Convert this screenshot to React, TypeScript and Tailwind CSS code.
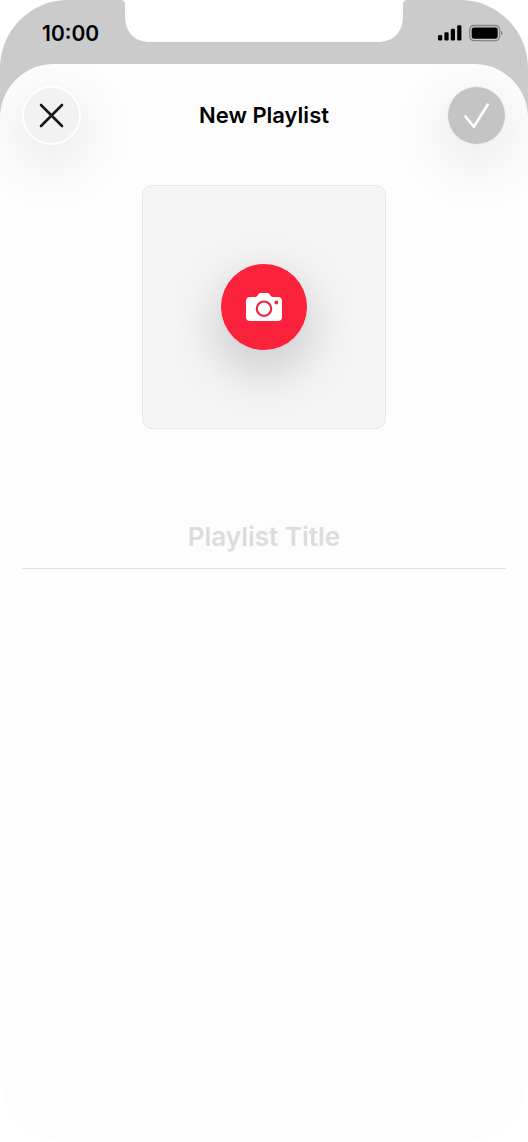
import React, { useState } from "react";

function Notch() {
    return (
        <svg viewBox="0 0 288 42" className="h-[42px] w-[288px]" fill="#ffffff" aria-hidden="true">
            <path d="M0 0C3.600 0 5 1.800 5 5V15C5 32 14 42 31 42H257C274 42 283 32 283 15V5C283 1.800 284.400 0 288 0Z" />
        </svg>
    );
}

function SignalIcon() {
    return (
        <svg viewBox="0 0 24 16" className="h-4 w-6" fill="#000000" aria-hidden="true">
            <rect x="0" y="10" width="4.200" height="5.500" rx="1.200" />
            <rect x="6.400" y="7.300" width="4.200" height="8.200" rx="1.200" />
            <rect x="12.800" y="3.700" width="4.200" height="11.800" rx="1.200" />
            <rect x="19.200" y="0.200" width="4.200" height="15.300" rx="1.200" />
        </svg>
    );
}

function BatteryIcon() {
    return (
        <svg viewBox="0 0 35 18" className="h-[18px] w-[35px]" fill="none" aria-hidden="true">
            <rect x="0.800" y="1.500" width="29.800" height="15.200" rx="4.200" stroke="#858585" strokeWidth="1.300" />
            <rect x="2.700" y="3.400" width="26" height="11.400" rx="2.400" fill="#000000" />
            <path d="M32 7V11.400C33.900 10.800 33.900 7.600 32 7Z" fill="#858585" />
        </svg>
    );
}

function CloseIcon() {
    return (
        <svg viewBox="0 0 25 25" className="size-[25px]" fill="none" stroke="#1a1a1a" strokeWidth="2.600" strokeLinecap="round" aria-hidden="true">
            <path d="M2 2L23 23M23 2L2 23" />
        </svg>
    );
}

function CheckIcon() {
    return (
        <svg viewBox="0 0 27 27" className="size-[27px]" fill="none" stroke="#ffffff" strokeWidth="2.600" strokeLinecap="round" strokeLinejoin="round" aria-hidden="true">
            <path d="M2.500 14.500L10.800 24.800L24.800 2.500" />
        </svg>
    );
}

function CameraIcon() {
    return (
        <svg viewBox="0 0 36 28" className="h-7 w-9" aria-hidden="true">
            <path
                d="M4 4H9.500C10.400 4 11 3.500 11.600 2.600L12.300 1.500C13 0.500 13.700 0 14.800 0H21.200C22.300 0 23 0.500 23.700 1.500L24.400 2.600C25 3.500 25.600 4 26.500 4H32C34.500 4 36 5.500 36 8V24C36 26.500 34.500 28 32 28H4C1.500 28 0 26.500 0 24V8C0 5.500 1.500 4 4 4Z"
                fill="#ffffff"
            />
            <circle cx="18" cy="15.700" r="7.200" fill="none" stroke="#e52b40" strokeWidth="2.200" />
            <circle cx="30.300" cy="9.500" r="1.900" fill="#e52b40" />
        </svg>
    );
}

function StatusBar() {
    return (
        <div className="grid h-16 grid-cols-[1fr_288px_1fr] items-start">
            <div className="flex h-[68px] items-center pl-[42px] text-[21px] font-semibold text-black">10:00</div>
            <Notch />
            <div className="flex h-[66px] items-center justify-end gap-[7px] pr-6">
                <SignalIcon />
                <BatteryIcon />
            </div>
        </div>
    );
}

export default function App() {
    const [title, setTitle] = useState("");

    return (
        <div className="flex min-h-screen flex-col bg-white font-['Inter',sans-serif]">
            <div className="flex flex-1 flex-col overflow-hidden rounded-[68px] bg-[linear-gradient(#cbcbcb_160px,#fdfdfd_160px)]">
                <StatusBar />
                <main className="flex flex-1 flex-col overflow-hidden rounded-t-[54px] bg-[#fdfdfd] px-[22px] pt-[22px]">
                    <header className="flex items-center justify-between">
                        <button
                            type="button"
                            aria-label="Close"
                            className="flex size-[59px] items-center justify-center rounded-full border-2 border-white bg-[#f2f2f2] shadow-[0_16px_60px_rgba(0,0,0,0.12)]"
                        >
                            <CloseIcon />
                        </button>
                        <h1 className="text-[22px] font-semibold text-black">New Playlist</h1>
                        <button
                            type="button"
                            aria-label="Save"
                            className="flex size-[59px] items-center justify-center rounded-full border border-[#f4f4f4] bg-[#c4c4c4] shadow-[0_16px_60px_rgba(0,0,0,0.12)]"
                        >
                            <CheckIcon />
                        </button>
                    </header>

                    <div className="mt-10 flex size-[244px] items-center justify-center self-center overflow-hidden rounded-[10px] border border-[#e8e8e8] bg-[#f5f5f5]">
                        <button
                            type="button"
                            aria-label="Add cover photo"
                            className="flex size-[86px] items-center justify-center rounded-full bg-[#fb233b] shadow-[0_18px_56px_rgba(0,0,0,0.22)]"
                        >
                            <CameraIcon />
                        </button>
                    </div>

                    <input
                        type="text"
                        aria-label="Playlist Title"
                        placeholder="Playlist Title"
                        value={title}
                        onChange={(e) => setTitle(e.target.value)}
                        className="mt-[76px] h-16 w-full border-b border-[#e3e3e3] bg-transparent text-center text-[26px] font-semibold text-black outline-none placeholder:text-[#dcdcdc]"
                    />
                </main>
            </div>
        </div>
    );
}
